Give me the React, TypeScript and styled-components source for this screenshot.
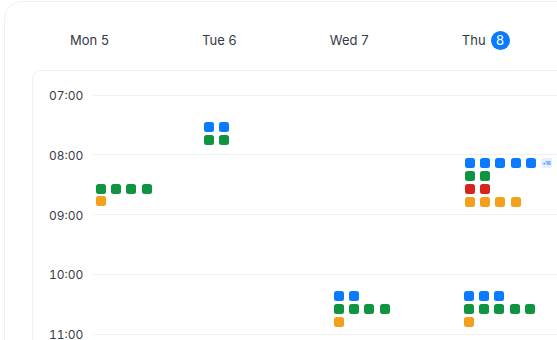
import React from "react";
import styled, { createGlobalStyle } from "styled-components";

const Global = createGlobalStyle`
  html, body { margin: 0; padding: 0; background: #ffffff; overflow: hidden; }
  body { font-family: Inter, "Noto Sans", sans-serif; -webkit-font-smoothing: antialiased; }
  * { box-sizing: border-box; }
`;

const HOUR_H = 59.75;
const FIRST_LINE = 24; // y of 07:00 line inside the grid card

const COLORS: Record<string, string> = {
  b: "#0a7bff",
  g: "#0f9441",
  r: "#d4261f",
  o: "#f3a11c",
};

type Cluster = { left: number; minutes: number; rows: string[]; more?: number };

const clusters: Cluster[] = [
  { left: 63, minutes: 90, rows: ["gggg", "o"] },
  { left: 171, minutes: 28, rows: ["bb", "gg"] },
  { left: 301, minutes: 198, rows: ["bb", "gggg", "o"] },
  { left: 432, minutes: 64.5, rows: ["bbbbb", "gg", "rr", "oooo"], more: 16 },
  { left: 431, minutes: 198, rows: ["bbb", "ggggg", "o"] },
];

const days = [
  { label: "Mon 5" },
  { label: "Tue 6" },
  { label: "Wed 7" },
  { label: "Thu", today: 8 },
];

const hours = ["07:00", "08:00", "09:00", "10:00", "11:00"];

const Page = styled.div`
  padding: 1px 0 0 4px;
  width: 700px;
`;

const OuterCard = styled.div`
  width: 680px;
  height: 400px;
  border: 1px solid #f0f0f3;
  border-radius: 18px;
  padding: 0 0 0 27px;
`;

const Header = styled.div`
  display: flex;
  gap: 93.3px;
  padding: 28px 0 20px 38px;
`;

const DayLabel = styled.div`
  display: flex;
  align-items: center;
  gap: 5px;
  height: 20px;
  font-size: 13px;
  line-height: 20px;
  color: #343945;
  white-space: nowrap;
`;

const TodayBadge = styled.span`
  display: inline-flex;
  align-items: center;
  justify-content: center;
  width: 19px;
  height: 19px;
  border-radius: 50%;
  background: #0a7bff;
  color: #ffffff;
  font-size: 13px;
  line-height: 1;
`;

const GridCard = styled.div`
  position: relative;
  width: 640px;
  height: 400px;
  border: 1px solid #f0f0f3;
  border-radius: 9px;
  padding: ${FIRST_LINE - 6}px 0 0 16px;
`;

const HourList = styled.div`
  display: grid;
  grid-auto-rows: ${HOUR_H}px;
`;

const HourRow = styled.div`
  display: flex;
  align-items: center;
  gap: 10px;
  height: 12px;
`;

const HourLabel = styled.span`
  position: relative;
  top: 1px;
  font-size: 12px;
  line-height: 12px;
  color: #383d4a;
  font-variant-numeric: tabular-nums;
`;

const HourLine = styled.div`
  flex: 1;
  height: 1px;
  background: #f0f1f4;
`;

const EventCluster = styled.div`
  position: absolute;
  display: flex;
  flex-direction: column;
  gap: 2.8px;
`;

const EventRow = styled.div`
  display: flex;
  align-items: center;
  gap: 5.2px;
`;

const Dot = styled.span<{ $c: string }>`
  width: 10px;
  height: 10px;
  border-radius: 2.5px;
  background: ${(p) => p.$c};
`;

const MoreBadge = styled.span`
  display: inline-flex;
  align-items: center;
  justify-content: center;
  width: 11px;
  height: 10px;
  border-radius: 2px;
  background: #e4efff;
  color: #2f84ff;
  font-size: 5px;
  font-weight: 600;
  letter-spacing: -0.2px;
`;

export default function App() {
  return (
    <>
      <Global />
      <Page>
        <OuterCard>
          <Header>
            {days.map((d) => (
              <DayLabel key={d.label}>
                {d.label}
                {d.today !== undefined && <TodayBadge>{d.today}</TodayBadge>}
              </DayLabel>
            ))}
          </Header>
          <GridCard>
            <HourList>
              {hours.map((h) => (
                <HourRow key={h}>
                  <HourLabel>{h}</HourLabel>
                  <HourLine />
                </HourRow>
              ))}
            </HourList>
            {clusters.map((c, i) => (
              <EventCluster
                key={i}
                style={{ left: c.left, top: FIRST_LINE - 1 + (c.minutes * HOUR_H) / 60 }}
              >
                {c.rows.map((row, ri) => (
                  <EventRow key={ri}>
                    {row.split("").map((ch, ci) => (
                      <Dot key={ci} $c={COLORS[ch]} />
                    ))}
                    {ri === 0 && c.more !== undefined && <MoreBadge>+{c.more}</MoreBadge>}
                  </EventRow>
                ))}
              </EventCluster>
            ))}
          </GridCard>
        </OuterCard>
      </Page>
    </>
  );
}
